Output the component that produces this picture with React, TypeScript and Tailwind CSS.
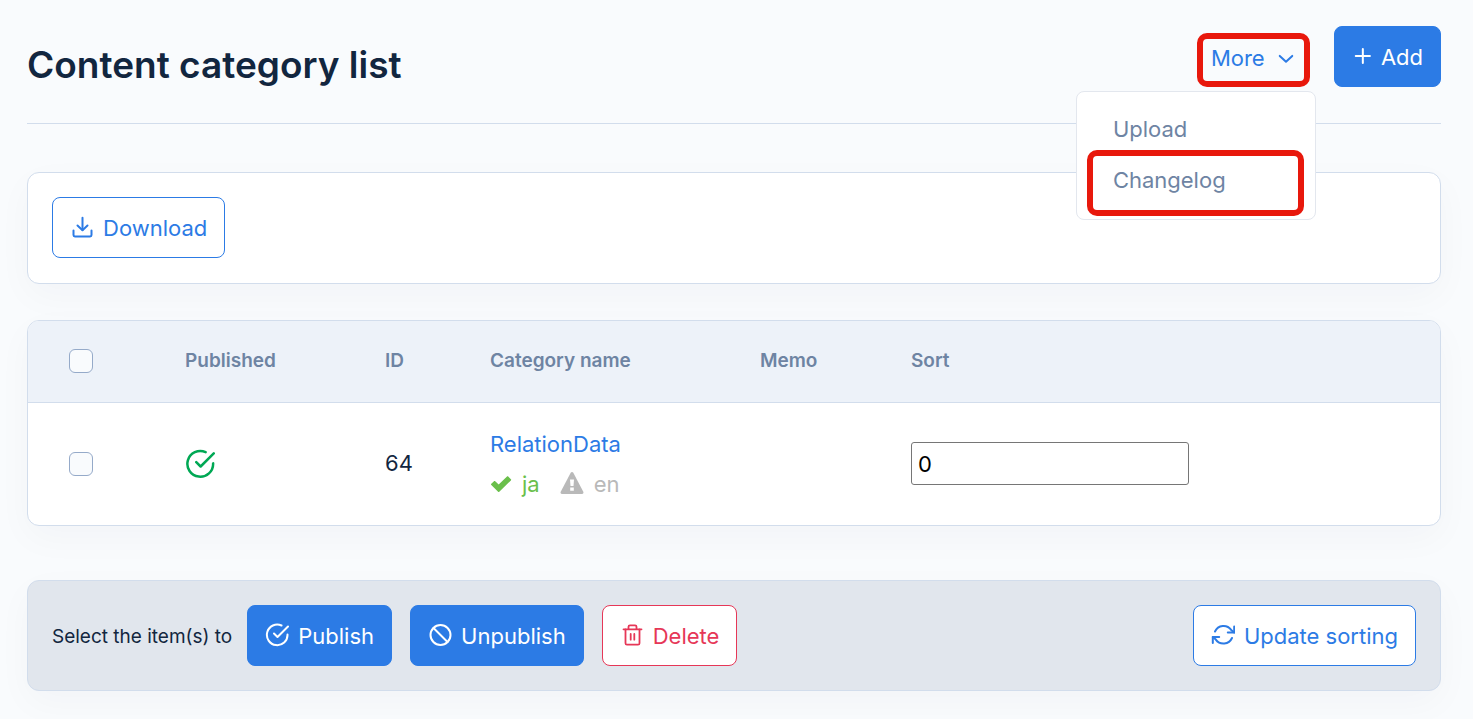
import { useState } from "react";
import type { ReactNode } from "react";

const iconProps = {
  viewBox: "0 0 24 24",
  fill: "none",
  stroke: "currentColor",
  strokeLinecap: "round",
  strokeLinejoin: "round",
  "aria-hidden": true,
} as const;

const CheckCircleIcon = ({ className }: { className: string }) => (
  <svg {...iconProps} strokeWidth={2} className={className}>
    <path d="M22.5 11.5a10.3 10.3 0 1 1-6-9" />
    <path d="M23 3.5 12.5 14 9 10.5" />
  </svg>
);

const DownloadIcon = () => (
  <svg {...iconProps} strokeWidth={2} className="size-6">
    <path d="M3.5 15.5V20c0 .8.6 1.4 1.4 1.400h15.200c.8 0 1.400-.6 1.400-1.400v-4.500" />
    <path d="M12.5 2.8V15" />
    <path d="m7.5 10.500 5 4.700 5-4.700" />
  </svg>
);

const BanIcon = () => (
  <svg {...iconProps} strokeWidth={2} className="size-6">
    <circle cx="12.5" cy="12" r="10" />
    <path d="m5.500 5 14 14" />
  </svg>
);

const TrashIcon = () => (
  <svg {...iconProps} strokeWidth={1.8} className="size-6">
    <path d="M3.500 6.300h18" />
    <path d="M5.500 6.300v13.900c0 .9.6 1.500 1.500 1.500h11c.9 0 1.500-.6 1.500-1.500V6.300" />
    <path d="M8.500 6V3.700c0-.9.6-1.400 1.500-1.400h5c.9 0 1.500.5 1.500 1.400V6" />
    <path d="M10.700 11v5.700M14.300 11v5.700" />
  </svg>
);

const RefreshIcon = () => (
  <svg {...iconProps} strokeWidth={2} className="size-6">
    <path d="M23.200 3.500v6h-6.400" />
    <path d="M1.800 20v-6h6.400" />
    <path d="M4 8.500a9.400 9.400 0 0 1 16.200-1.600l3 2.600" />
    <path d="m1.800 14 3 2.600A9.400 9.400 0 0 0 21 15" />
  </svg>
);

const buttonStyles = {
  primary: "border-[#2c7be5] bg-[#2c7be5] text-white",
  outline: "border-[#2c7be5] bg-white text-[#2c7be5]",
  danger: "border-[#e63757] bg-white text-[#e63757]",
};

type ButtonProps = {
  variant: keyof typeof buttonStyles;
  children: ReactNode;
};

const Button = ({ variant, children }: ButtonProps) => (
  <button
    type="button"
    className={`flex h-[61px] items-center gap-[9px] whitespace-nowrap rounded-lg border px-[17px] pt-[2px] text-[22px] [&>svg]:mb-1 ${buttonStyles[variant]}`}
  >
    {children}
  </button>
);

const Checkbox = ({ label }: { label: string }) => (
  <input
    type="checkbox"
    aria-label={label}
    className="block size-6 appearance-none rounded-md border border-[#95aac9] bg-[#f9fbfd] checked:bg-[#2c7be5]"
  />
);

const cardStyle = "rounded-xl border border-[#d2ddec] shadow-[0_12px_36px_rgba(18,38,63,0.03)]";

const MoreMenu = () => {
  const [open, setOpen] = useState(true);

  return (
    <div className="relative mt-[7px]">
      <button
        type="button"
        aria-expanded={open}
        onClick={() => setOpen(!open)}
        className="flex h-[54px] w-[113px] items-center justify-between rounded-[10px] border-[6px] border-[#e8180c] px-2 pb-1 text-[22px] text-[#2c7be5]"
      >
        More
        <svg {...iconProps} strokeWidth={2.4} className="size-5">
          <path d="m4.500 9.500 7.500 7 7.500-7" />
        </svg>
      </button>
      {open && (
        <div className="absolute -right-[6px] top-[58px] z-10 w-[240px] rounded-lg border border-[#e3e7ee] bg-white px-[10px] pb-[3px] pt-[19px] text-[22px] text-[#6e84a3]">
          <a href="#upload" className="block px-[26px] pb-[3px] leading-9">
            Upload
          </a>
          <a
            href="#changelog"
            className="block h-[66px] w-[217px] rounded-[10px] border-[6px] border-[#e8180c] px-5 pt-[6px] leading-9"
          >
            Changelog
          </a>
        </div>
      )}
    </div>
  );
};

const App = () => {
  const [sort, setSort] = useState("0");

  return (
    <div className="min-h-screen bg-[#f9fbfd] pb-7 pl-[27px] pr-8 pt-[26px] font-['Inter',sans-serif] text-[#12263f]">
      <header className="flex h-[98px] items-start justify-between border-b border-[#d2ddec]">
        <h1 className="pt-[15px] text-[37px] font-semibold leading-[48px]">Content category list</h1>
        <div className="flex items-start gap-6">
          <MoreMenu />
          <Button variant="primary">
            <svg {...iconProps} strokeWidth={2.4} className="size-5">
              <path d="M13 3.500v17M4.500 12h17" />
            </svg>
            Add
          </Button>
        </div>
      </header>

      <main>
        <section className={`mt-12 bg-white p-6 pb-[25px] ${cardStyle}`}>
          <div className="flex">
            <Button variant="outline">
              <DownloadIcon />
              Download
            </Button>
          </div>
        </section>

        <section className={`mt-9 overflow-hidden bg-white ${cardStyle}`}>
          <table className="w-full table-fixed text-left">
            <thead className="bg-[#edf2f9] text-[19px] text-[#6e84a3]">
              <tr className="h-[81px] border-b border-[#d2ddec]">
                <th className="w-[157px] pl-[41px]">
                  <Checkbox label="Select all" />
                </th>
                <th className="w-[200px] font-semibold">Published</th>
                <th className="w-[105px] font-semibold">ID</th>
                <th className="w-[270px] font-semibold">Category name</th>
                <th className="w-[151px] font-semibold">Memo</th>
                <th className="font-semibold">Sort</th>
              </tr>
            </thead>
            <tbody className="text-[22px]">
              <tr className="h-[123px]">
                <td className="pl-[41px]">
                  <Checkbox label="Select RelationData" />
                </td>
                <td>
                  <CheckCircleIcon className="size-[30px] text-[#00a854]" />
                </td>
                <td>64</td>
                <td>
                  <a href="#relation-data" className="block leading-10 text-[#2c7be5]">
                    RelationData
                  </a>
                  <div className="flex items-center leading-10">
                    <svg viewBox="0 0 22 18" fill="#6abf4b" aria-hidden="true" className="mr-[10px] h-[18px] w-[22px]">
                      <path d="M1.300 8.800 4 6.200c.4-.4.8-.4 1.200 0l3.500 3.400L17 1.500c.4-.4.800-.4 1.200 0l2.700 2.700c.4.4.4.8 0 1.200L9.300 16.700c-.4.4-.8.4-1.200 0L1.300 10c-.4-.4-.4-.8 0-1.200z" />
                    </svg>
                    <span className="mr-5 text-[#6abf4b]">ja</span>
                    <svg viewBox="0 0 24 24" fill="#b9b9b9" aria-hidden="true" className="mr-[10px] size-6">
                      <path d="M12 0c.6 0 1 .3 1.300.8l10 19c.5 1-.1 2.200-1.300 2.200H2c-1.200 0-1.800-1.200-1.300-2.200l10-19C11 .3 11.400 0 12 0z" />
                      <path fill="#fff" d="M10 7.500h4l-.5 6.500h-3zM10.200 15.500h3.600v3.300h-3.600z" />
                    </svg>
                    <span className="text-[#b9b9b9]">en</span>
                  </div>
                </td>
                <td></td>
                <td>
                  <input
                    type="text"
                    aria-label="Sort order"
                    value={sort}
                    onChange={(e) => setSort(e.target.value)}
                    className="block h-[43px] w-[278px] rounded-[3px] border border-[#767676] bg-white px-[6px] text-black"
                  />
                </td>
              </tr>
            </tbody>
          </table>
        </section>

        <section className={`mt-[54px] flex items-center justify-between bg-[#e1e6ed] p-6 ${cardStyle}`}>
          <div className="flex items-center gap-[15px]">
            <p className="pt-[3px] text-[19px]">Select the item(s) to</p>
            <div className="flex gap-[18px]">
              <Button variant="primary">
                <CheckCircleIcon className="size-6" />
                Publish
              </Button>
              <Button variant="primary">
                <BanIcon />
                Unpublish
              </Button>
              <Button variant="danger">
                <TrashIcon />
                Delete
              </Button>
            </div>
          </div>
          <Button variant="outline">
            <RefreshIcon />
            Update sorting
          </Button>
        </section>
      </main>
    </div>
  );
};

export default App;
